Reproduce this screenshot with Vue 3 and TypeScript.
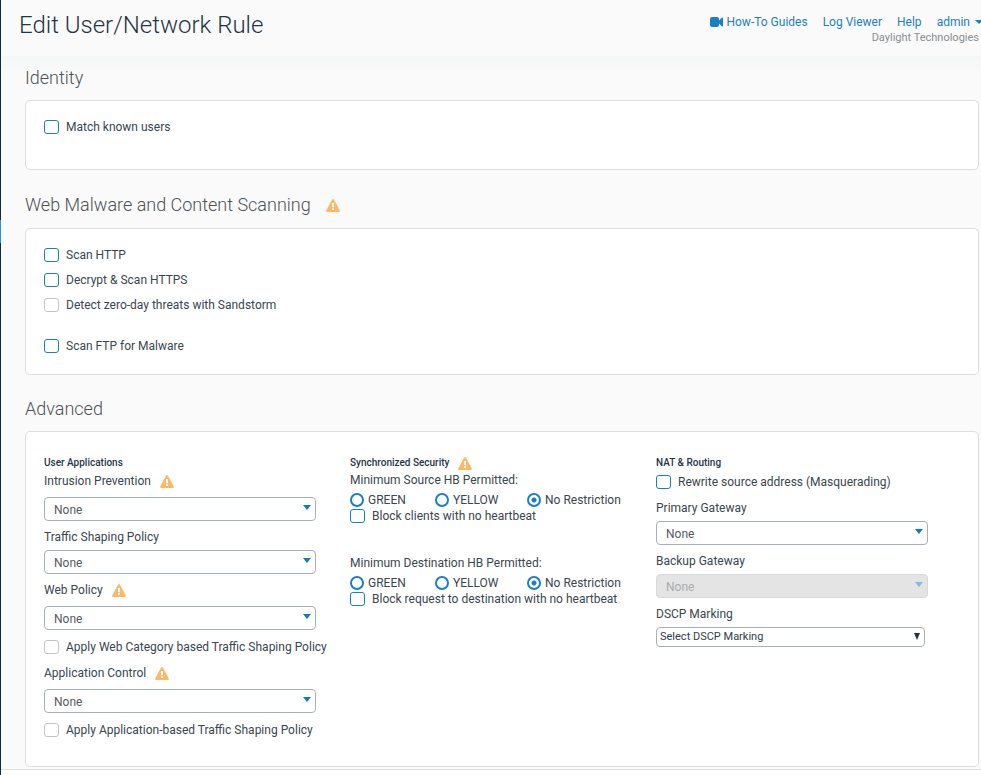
<script setup lang="ts">
import { reactive, ref } from 'vue'

interface Option {
  id: string
  label: string
  disabled?: boolean
  spaced?: boolean
}

interface PolicyField {
  id: string
  label: string
  warn?: boolean
  check?: string
}

const scanOptions: Option[] = [
  { id: 'scan-http', label: 'Scan HTTP' },
  { id: 'scan-https', label: 'Decrypt & Scan HTTPS' },
  { id: 'sandstorm', label: 'Detect zero-day threats with Sandstorm', disabled: true },
  { id: 'scan-ftp', label: 'Scan FTP for Malware', spaced: true },
]

const policies: PolicyField[] = [
  { id: 'ips', label: 'Intrusion Prevention', warn: true },
  { id: 'traffic', label: 'Traffic Shaping Policy' },
  { id: 'web', label: 'Web Policy', warn: true, check: 'Apply Web Category based Traffic Shaping Policy' },
  { id: 'app', label: 'Application Control', warn: true, check: 'Apply Application-based Traffic Shaping Policy' },
]

const heartbeats = [
  { id: 'source', label: 'Minimum Source HB Permitted:', block: 'Block clients with no heartbeat' },
  { id: 'destination', label: 'Minimum Destination HB Permitted:', block: 'Block request to destination with no heartbeat' },
]

const levels = ['GREEN', 'YELLOW', 'No Restriction']
const permitted = reactive<Record<string, string>>({
  source: 'No Restriction',
  destination: 'No Restriction',
})
const checked = ref<string[]>([])
</script>

<template>
  <div class="shell">
    <svg width="0" height="0" class="defs" aria-hidden="true">
      <symbol id="warning" viewBox="0 0 14 13">
        <path fill="#fcb864" d="M6 .8Q7-.6 8 .8L13.7 11.200Q14.300 12.800 12.800 13H1.200Q-.3 12.800.3 11.200Z" />
        <path fill="#fff" d="M6 4h2v4.200H6zM6 9.200h2V11H6z" />
      </symbol>
    </svg>
    <div class="rail"><div class="rail-active"></div></div>
    <div class="page">
      <header class="header">
        <h1>Edit User/Network Rule</h1>
        <div class="account">
          <nav class="links">
            <a href="#guides" class="guides">
              <svg width="13" height="10" viewBox="0 0 13 10" aria-hidden="true">
                <path fill="currentColor" d="M1.500 0H7Q9 0 9 2V3.500L11.800.8Q13 .2 13 1.200V8.800Q13 9.800 11.800 9.200L9 6.500V8Q9 10 7 10H2Q0 10 0 8V2Q0 0 2 0Z" />
              </svg>
              How-To Guides
            </a>
            <a href="#log">Log Viewer</a>
            <a href="#help">Help</a>
            <a href="#admin" class="admin">admin<span class="caret"></span></a>
          </nav>
          <p class="company">Daylight Technologies</p>
        </div>
      </header>

      <main class="content">
        <section class="identity-section">
          <h2>Identity</h2>
          <div class="card identity">
            <label class="check"><input v-model="checked" type="checkbox" value="known" />Match known users</label>
          </div>
        </section>

        <section class="scanning">
          <h2>
            Web Malware and Content Scanning
            <svg class="warn" width="14" height="13" aria-hidden="true"><use href="#warning" /></svg>
          </h2>
          <div class="card scan-list">
            <label v-for="o in scanOptions" :key="o.id" class="check" :class="{ spaced: o.spaced }">
              <input v-model="checked" type="checkbox" :value="o.id" :disabled="o.disabled" />{{ o.label }}
            </label>
          </div>
        </section>

        <section class="advanced">
          <h2>Advanced</h2>
          <div class="card columns">
            <div class="column">
              <h3>User Applications</h3>
              <div v-for="p in policies" :key="p.id" class="field">
                <label class="caption" :class="{ warned: p.warn }" :for="p.id">
                  {{ p.label }}
                  <svg v-if="p.warn" class="warn" width="14" height="13" aria-hidden="true"><use href="#warning" /></svg>
                </label>
                <div class="select">
                  <select :id="p.id"><option>None</option></select>
                </div>
                <label v-if="p.check" class="check">
                  <input type="checkbox" disabled />{{ p.check }}
                </label>
              </div>
            </div>

            <div class="column">
              <h3>
                Synchronized Security
                <svg class="warn" width="14" height="13" aria-hidden="true"><use href="#warning" /></svg>
              </h3>
              <fieldset v-for="h in heartbeats" :key="h.id" class="heartbeat">
                <legend>{{ h.label }}</legend>
                <div class="radios">
                  <label v-for="l in levels" :key="l" class="radio">
                    <input v-model="permitted[h.id]" type="radio" :name="h.id" :value="l" />{{ l }}
                  </label>
                </div>
                <label class="check tight"><input v-model="checked" type="checkbox" :value="h.id" />{{ h.block }}</label>
              </fieldset>
            </div>

            <div class="column">
              <h3>NAT &amp; Routing</h3>
              <label class="check rewrite"><input v-model="checked" type="checkbox" value="masq" />Rewrite source address (Masquerading)</label>
              <div class="field">
                <label class="caption" for="primary">Primary Gateway</label>
                <div class="select"><select id="primary"><option>None</option></select></div>
              </div>
              <div class="field">
                <label class="caption" for="backup">Backup Gateway</label>
                <div class="select off"><select id="backup" disabled><option>None</option></select></div>
              </div>
              <div class="field">
                <label class="caption" for="dscp">DSCP Marking</label>
                <div class="select plain"><select id="dscp"><option>Select DSCP Marking</option></select></div>
              </div>
            </div>
          </div>
        </section>
      </main>
      <footer class="footer"></footer>
    </div>
  </div>
</template>

<style>
body {
  margin: 0;
  background: #fafafa;
}
</style>

<style scoped>
* {
  box-sizing: border-box;
}
.shell {
  display: flex;
  min-height: 100vh;
  overflow: hidden;
  font-family: Roboto, 'Liberation Sans', sans-serif;
  font-size: 12px;
  line-height: 18px;
  color: #3a4650;
}
.defs {
  position: absolute;
}
.rail {
  width: 1px;
  flex: none;
  padding-top: 220px;
  background: #0d2c41;
}
.rail-active {
  height: 23px;
  background: #2492dc;
}
.page {
  flex: 1;
  min-width: 0;
  display: flex;
  flex-direction: column;
}
h1,
h2,
h3,
p {
  margin: 0;
}
.header {
  display: flex;
  justify-content: space-between;
  height: 56px;
  padding: 8px 0 0 18px;
}
h1 {
  font-size: 24px;
  font-weight: 300;
  line-height: 34px;
  color: #1f3548;
}
.account {
  padding-top: 5px;
}
.links {
  display: flex;
  gap: 15px;
  margin-right: -2px;
}
.links a {
  color: #1a80c6;
  text-decoration: none;
  line-height: 18px;
}
.guides {
  display: flex;
  align-items: center;
  gap: 3px;
}
.admin {
  display: flex;
  align-items: center;
  gap: 5px;
}
.caret {
  border: 4px solid transparent;
  border-top-color: #1a80c6;
  border-bottom: 0;
}
.company {
  padding-right: 2px;
  text-align: right;
  font-size: 11px;
  line-height: 14px;
  color: #8a8d92;
}
.content {
  padding: 0 2px 2px 24px;
  background: linear-gradient(#f5f6f6, #fafafa 20px);
}
h2 {
  display: flex;
  align-items: center;
  gap: 15px;
  font-size: 18px;
  font-weight: 300;
  line-height: 46px;
  color: #4e5154;
}
.identity-section h2 {
  line-height: 44px;
}
.scanning h2 {
  margin-top: 12px;
}
.advanced h2 {
  margin-top: 12px;
  line-height: 44px;
}
.warn {
  flex: none;
}
.card {
  border: 1px solid #dcdedf;
  border-radius: 5px;
  background: #fff;
  padding: 17px 16px 19px 18px;
}
.identity {
  padding-bottom: 33px;
}
.scan-list {
  display: flex;
  flex-direction: column;
  gap: 7px;
}
.check {
  display: flex;
  align-items: center;
  gap: 7px;
  white-space: nowrap;
}
.spaced {
  margin-top: 16px;
}
input {
  appearance: none;
  flex: none;
  margin: 0;
  background: #fff;
}
input[type='checkbox'] {
  width: 15px;
  height: 14px;
  border: 1px solid #1a80c6;
  border-radius: 3px;
}
input[type='checkbox']:disabled {
  border-color: #c4c6c8;
}
input[type='checkbox']:checked {
  background: #1a80c6;
}
input[type='radio'] {
  width: 14px;
  height: 14px;
  border: 2px solid #1a80c6;
  border-radius: 50%;
}
input[type='radio']:checked {
  background: radial-gradient(#1a80c6 2px, #fff 3px);
}
.columns {
  display: grid;
  grid-template-columns: repeat(3, 1fr);
  padding: 22px 16px 27px 18px;
}
.column {
  min-width: 0;
}
h3 {
  display: flex;
  align-items: center;
  gap: 9px;
  height: 18px;
  font-size: 10px;
  font-weight: 500;
  color: #1f3548;
}
.field + .field {
  margin-top: 7px;
}
.field:has(.check) + .field {
  margin-top: 8px;
}
.caption {
  display: flex;
  gap: 9px;
  height: 22px;
}
.caption.warned {
  height: 25px;
}
.caption .warn {
  margin-top: 3px;
}
.field .check {
  margin-top: 8px;
}
.select {
  position: relative;
  width: 89%;
}
.select::after {
  content: '';
  position: absolute;
  right: 5px;
  top: 8px;
  border: 4px solid transparent;
  border-top-width: 5px;
  border-top-color: #0f7cc4;
  border-bottom: 0;
  pointer-events: none;
}
select {
  appearance: none;
  display: block;
  width: 100%;
  height: 24px;
  padding: 2px 20px 0 9px;
  border: 1px solid #a9b1b8;
  border-radius: 4px;
  background: #fff;
  font: inherit;
  color: #55595e;
}
.off select {
  border-color: #d5d9dc;
  background: #e4e4e4;
  color: #a9abad;
  opacity: 1;
}
.off::after {
  border-top-color: #7fbbe2;
}
.plain {
  width: 88%;
}
.plain select {
  height: 20px;
  padding: 0 20px 0 3px;
  font-size: 11px;
  color: #30404d;
}
.plain::after {
  top: 6px;
  border-width: 7px 3px 0;
  border-top-color: #1f3548;
}
.heartbeat {
  min-width: 0;
  margin: 0;
  padding: 0;
  border: 0;
}
.heartbeat + .heartbeat {
  margin-top: 31px;
}
legend {
  padding: 0;
  line-height: 17px;
}
.radios {
  display: grid;
  grid-template-columns: 85px 92px auto;
  padding-top: 3px;
}
.radio {
  display: flex;
  align-items: center;
  gap: 4px;
  line-height: 16px;
  white-space: nowrap;
}
.tight {
  line-height: 16px;
}
.rewrite {
  margin: 1px 0 8px;
}
.footer {
  flex: 1;
  border-top: 1px solid #dcdedf;
  background: #fff;
}
</style>
